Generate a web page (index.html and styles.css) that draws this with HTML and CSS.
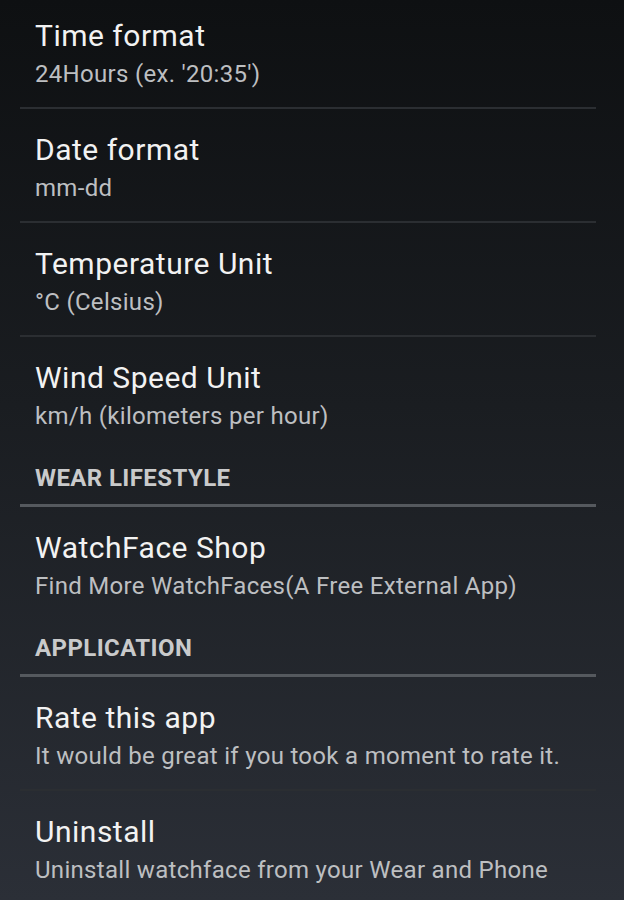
FILE: index.html
```html
<!DOCTYPE html>
<html lang="en">
<head>
    <meta charset="UTF-8">
    <meta name="viewport" content="width=device-width, initial-scale=1.0">
    <title>Watchface Settings</title>
    <link rel="stylesheet" href="styles.css">
</head>
<body>
    <div class="settings-list">
        <div class="pref-item first">
            <div class="pref-title">Time format</div>
            <div class="pref-summary">24Hours (ex. '20:35')</div>
        </div>
        <div class="pref-item">
            <div class="pref-title">Date format</div>
            <div class="pref-summary">mm-dd</div>
        </div>
        <div class="pref-item">
            <div class="pref-title">Temperature Unit</div>
            <div class="pref-summary">°C (Celsius)</div>
        </div>
        <div class="pref-item last">
            <div class="pref-title">Wind Speed Unit</div>
            <div class="pref-summary">km/h (kilometers per hour)</div>
        </div>

        <div class="pref-category">WEAR LIFESTYLE</div>
        <div class="pref-item last">
            <div class="pref-title">WatchFace Shop</div>
            <div class="pref-summary">Find More WatchFaces(A Free External App)</div>
        </div>

        <div class="pref-category">APPLICATION</div>
        <div class="pref-item">
            <div class="pref-title">Rate this app</div>
            <div class="pref-summary">It would be great if you took a moment to rate it.</div>
        </div>
        <div class="pref-item last">
            <div class="pref-title">Uninstall</div>
            <div class="pref-summary">Uninstall watchface from your Wear and Phone</div>
        </div>
    </div>
</body>
</html>
```

FILE: styles.css
```css
html {
    height: 100%;
    background: linear-gradient(to bottom, #0e1012 0%, #1a1d21 45%, #2b2f37 100%);
}
body {
    margin: 0;
    height: 900px;
    overflow: hidden;
    font-family: Roboto, "Noto Sans", sans-serif;
}
.settings-list {
    margin: -5px 28px 0 20px;
}
.pref-item {
    height: 114px;
    box-sizing: border-box;
    padding: 23px 0 0 15px;
    border-bottom: 2px solid #2b2e32;
}
.pref-item.last {
    height: 112px;
    border-bottom: none;
}
.pref-title {
    font-size: 30px;
    line-height: 36px;
    letter-spacing: 0.5px;
    color: #f2f2f2;
}
.pref-summary {
    margin-top: 2px;
    font-size: 24px;
    line-height: 36px;
    letter-spacing: 0.3px;
    color: #bdbfc1;
}
.pref-category {
    height: 58px;
    box-sizing: border-box;
    padding: 14px 0 0 15px;
    font-size: 24px;
    line-height: 30px;
    letter-spacing: 0.4px;
    font-weight: bold;
    color: #c9cacb;
    border-bottom: 3px solid #55595e;
}
```
